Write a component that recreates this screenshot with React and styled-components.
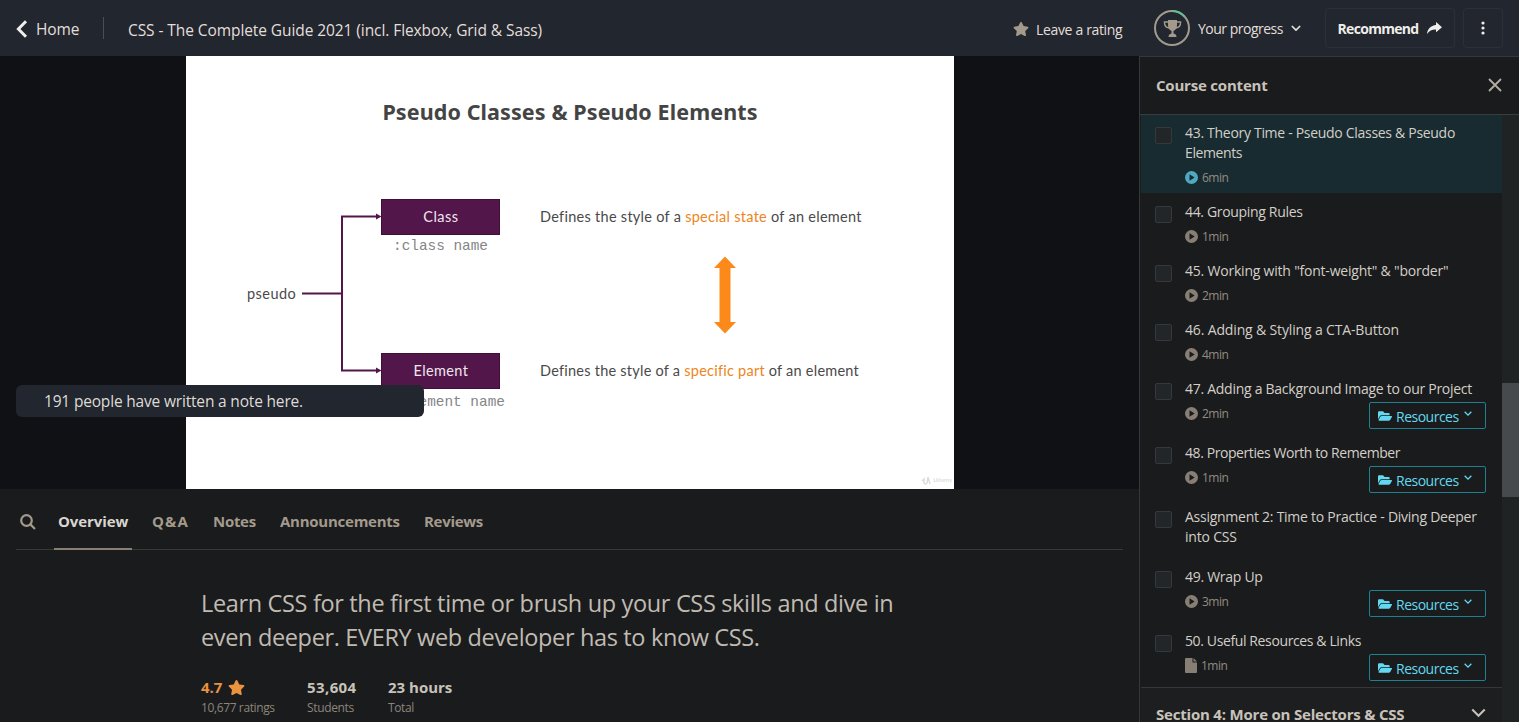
import React from "react";
import styled, { createGlobalStyle } from "styled-components";
import { FaStar, FaFolderOpen } from "react-icons/fa";

const GlobalStyle = createGlobalStyle`
  * { box-sizing: border-box; }
  html, body { margin: 0; height: 722px; overflow: hidden; background: #1a1b1d; }
  body { font-family: "Open Sans", "Noto Sans", sans-serif; color: #d6d2cb; font-size: 14px; }
  svg { display: block; flex: none; }
`;

const Page = styled.div`
  height: 722px;
  display: flex;
  flex-direction: column;
  overflow: hidden;
`;

const Text = styled.span`
  white-space: nowrap;
  font-size: ${(p) => p.$size || 15}px;
  font-weight: ${(p) => p.$weight || 400};
  color: ${(p) => p.$color || "inherit"};
  letter-spacing: ${(p) => p.$track || 0}px;
`;

/* Header */
const Header = styled.header`
  height: 56px;
  flex: none;
  display: flex;
  align-items: center;
  padding: 0 16px;
  background: #22262f;
  color: #e2dfda;
`;
const HomeLink = styled.a`
  display: flex;
  align-items: center;
  gap: 8px;
  width: 87px;
  padding-top: 2px;
`;
const Divider = styled.i`
  width: 1px;
  height: 22px;
  background: #4d4e50;
  margin-right: 24px;
`;
const CourseName = styled.div`
  flex: 1;
  padding-top: 4px;
`;
const Rating = styled.div`
  display: flex;
  align-items: center;
  gap: 7px;
  width: 141px;
  padding-top: 2px;
`;
const Progress = styled.div`
  display: flex;
  align-items: center;
  gap: 8px;
  width: 171px;
`;
const Ring = styled.div`
  position: relative;
  width: 36px;
  height: 36px;
  display: grid;
  place-items: center;
  color: #a39a8c;
`;
const RingArc = styled.svg`
  position: absolute;
  inset: 0;
`;
const HeaderButton = styled.button`
  display: flex;
  align-items: center;
  justify-content: center;
  gap: 9px;
  width: ${(p) => p.$width}px;
  height: 40px;
  padding: 0;
  margin-right: ${(p) => p.$gap || 0}px;
  border: 1px solid #2c3038;
  border-radius: 4px;
  background: transparent;
  color: #f0eeea;
  font-family: inherit;
`;

/* Columns */
const Columns = styled.div`
  flex: 1;
  display: flex;
  min-height: 0;
`;
const Main = styled.main`
  width: 1139px;
  flex: none;
`;
const Player = styled.section`
  position: relative;
  height: 433px;
  display: flex;
  padding-left: 186px;
  background: #101114;
`;
const Slide = styled.div`
  position: relative;
  width: 768px;
  height: 432.5px;
  background: #fff;
  color: #4a4a4a;
  font-family: Lato, sans-serif;
`;
const Connectors = styled.svg`
  position: absolute;
  inset: 0;
`;
const SlideTitle = styled.h1`
  margin: 0;
  padding-top: 40px;
  text-align: center;
  font: 700 21.5px/32px "Noto Sans", sans-serif;
  letter-spacing: 0.1px;
  color: #444;
`;
const Node = styled.div`
  position: absolute;
  left: ${(p) => p.$x}px;
  top: ${(p) => p.$y}px;
  white-space: nowrap;
  font-size: 14.5px;
  line-height: 20px;
  letter-spacing: ${(p) => p.$track || 0}px;
  em { font-style: normal; color: #ee8420; }
`;
const Box = styled(Node)`
  width: 119px;
  height: 36px;
  line-height: 34px;
  text-align: center;
  background: #53164b;
  border: 1px solid #3e1038;
  color: #efe6ee;
`;
const Code = styled(Node)`
  font-family: "Liberation Mono", monospace;
  font-size: 14.4px;
  color: #858585;
`;
const Watermark = styled(Node)`
  display: flex;
  align-items: center;
  gap: 1px;
  font-size: 6px;
  font-weight: 700;
  line-height: 10px;
  color: #dedede;
`;
const NoteToast = styled.div`
  position: absolute;
  left: 16px;
  top: 328.5px;
  width: 408px;
  height: 32px;
  padding: 0 28px;
  display: flex;
  align-items: center;
  border-radius: 6px;
  background: #22262f;
  color: #dedbd5;
`;

const Tabs = styled.nav`
  display: flex;
  align-items: stretch;
  height: 61px;
  margin: 0 16px;
  padding-left: 4px;
  gap: 16px;
  border-bottom: 1px solid #3a392f;
`;
const SearchTab = styled.div`
  display: flex;
  align-items: center;
  width: 18px;
  height: 65px;
  color: #a39a8c;
`;
const Tab = styled.div`
  width: ${(p) => p.$width}px;
  height: 61px;
  padding: 21px 4px 0;
  line-height: 22px;
  color: ${(p) => (p.$active ? "#dad6cf" : "#a39a8c")};
  border-bottom: ${(p) => (p.$active ? "2px solid #887f72" : "none")};
`;
const Overview = styled.section`
  padding: 37px 0 0 201px;
`;
const Headline = styled.h2`
  margin: 0;
  display: flex;
  flex-direction: column;
  font-weight: 400;
  line-height: 33.6px;
  color: #c0bbb2;
`;
const Stats = styled.div`
  display: flex;
  margin-top: 22px;
`;
const Stat = styled.div`
  width: ${(p) => p.$width}px;
  color: ${(p) => p.$color || "#c8c3ba"};
`;
const StatValue = styled.div`
  display: flex;
  align-items: center;
  gap: 6px;
  height: 22px;
`;
const StatLabel = styled.div`
  line-height: 18px;
  color: #8d857a;
`;

/* Sidebar */
const Sidebar = styled.aside`
  flex: 1;
  display: flex;
  flex-direction: column;
  border-left: 1px solid #35383a;
  border-top: 1px solid #35383a;
  background: #1a1b1d;
`;
const SideHeader = styled.div`
  height: 58px;
  flex: none;
  display: flex;
  align-items: center;
  justify-content: space-between;
  padding: 0 17px 1px 16px;
  border-bottom: 1px solid #3a3d3f;
  color: #c8c3ba;
`;
const SideBody = styled.div`
  flex: 1;
  display: flex;
  min-height: 0;
`;
const Lessons = styled.div`
  flex: 1;
  padding-left: 1px;
`;
const Scrollbar = styled.div`
  width: 17px;
  padding-top: 268px;
  background: #1f2324;
`;
const Thumb = styled.div`
  height: 114px;
  background: #464a4d;
`;
const Item = styled.div`
  display: flex;
  padding: 8px 16px ${(p) => p.$bottom}px 14px;
  background: ${(p) => (p.$current ? "#182b31" : "transparent")};
  border-bottom: ${(p) => (p.$current ? "1px solid #1a1b1d" : "none")};
`;
const Check = styled.i`
  width: 17px;
  height: 17px;
  flex: none;
  margin: 4px 13px 0 0;
  border: 1px solid #35393b;
  border-radius: 2px;
  background: #222628;
`;
const ItemBody = styled.div`
  flex: 1;
`;
const ItemTitle = styled.div`
  display: flex;
  flex-direction: column;
  line-height: 20px;
  color: #d3cfc8;
`;
const Meta = styled.div`
  display: flex;
  justify-content: space-between;
  margin-top: 3px;
`;
const Duration = styled.div`
  display: flex;
  align-items: center;
  gap: 4px;
  height: 16px;
  margin: 3px 0 1px;
  color: ${(p) => (p.$current ? "#4fa9c0" : "#887f74")};
`;
const Resources = styled.button`
  display: flex;
  align-items: center;
  width: 117px;
  height: 27px;
  padding: 1px 13px 0 8px;
  border: 1px solid #1f8091;
  border-radius: 2px;
  background: transparent;
  color: #62d9f0;
  font-family: inherit;
  svg:first-child { margin: 0 4px 0 0; }
  svg:last-child { margin: -4px 0 0 auto; }
`;
const SectionRow = styled.div`
  display: flex;
  justify-content: space-between;
  height: 60px;
  padding: 15px 16px 0 15px;
  line-height: 22px;
  border-top: 1px solid #35383a;
  background: #1c1e1f;
  color: #c8c3ba;
  svg { margin-top: 5px; }
`;

function Chevron({ size = 12, width = 2 }) {
  return (
    <svg width={size} height={(size * 8) / 12} viewBox="0 0 12 8" fill="none" stroke="currentColor" strokeWidth={width}>
      <path d="M1 1.200l5 5 5-5" />
    </svg>
  );
}

function PlayIcon() {
  return (
    <svg width="13" height="13" viewBox="0 0 13 13" fill="currentColor">
      <path fillRule="evenodd" d="M6.500 0a6.500 6.500 0 1 1 0 13a6.500 6.500 0 1 1 0-13zM4.500 3.300v6.400l5.200-3.200z" />
    </svg>
  );
}

function FileIcon() {
  return (
    <svg width="12" height="15" viewBox="0 0 12 15" fill="currentColor">
      <path d="M1 0h6.500v4.500H12V14a1 1 0 0 1-1 1H1a1 1 0 0 1-1-1V1a1 1 0 0 1 1-1zM8.500 0L12 3.500H8.500z" />
    </svg>
  );
}

function TrophyIcon() {
  return (
    <svg width="19" height="17" viewBox="0 0 18 17">
      <path fill="currentColor" d="M4.500 0h9v5.500c0 3-1.700 4.800-3.500 5.300v2.700c2 .3 3 1.500 3 3.500H5c0-2 1-3.200 3-3.500v-2.700C6.200 10.300 4.500 8.500 4.500 5.500z" />
      <path fill="none" stroke="currentColor" strokeWidth="1.400" d="M5 2H.9c0 3.500 1.400 5.700 4.800 6M13 2h4.100c0 3.500-1.400 5.700-4.800 6" />
    </svg>
  );
}

function ShareIcon() {
  return (
    <svg width="15" height="12" viewBox="0 0 15 12" fill="currentColor">
      <path d="M9 0l6 5.200-6 5.100V7.400C5 7.300 2.300 8.600 0 12 .6 6.900 3.800 3.600 9 3.100z" />
    </svg>
  );
}

const lessons = [
  { lines: [["43. Theory Time - Pseudo Classes & Pseudo", -0.3], ["Elements", -0.4]], time: "6min", current: true },
  { lines: [["44. Grouping Rules", -0.33]], time: "1min" },
  { lines: [['45. Working with "font-weight" & "border"', -0.21]], time: "2min" },
  { lines: [["46. Adding & Styling a CTA-Button", -0.15]], time: "4min" },
  { lines: [["47. Adding a Background Image to our Project", -0.27]], time: "2min", resources: true },
  { lines: [["48. Properties Worth to Remember", -0.42]], time: "1min", resources: true },
  { lines: [["Assignment 2: Time to Practice - Diving Deeper", -0.26], ["into CSS", -0.2]] },
  { lines: [["49. Wrap Up", -0.28]], time: "3min", resources: true },
  { lines: [["50. Useful Resources & Links", -0.38]], time: "1min", resources: true, file: true },
];

function Lesson({ lines, time, current, resources, file }) {
  const bottom = !time ? 12 : resources ? 6 : current ? 7 : 8;
  return (
    <Item $current={current} $bottom={bottom}>
      <Check />
      <ItemBody>
        <ItemTitle>
          {lines.map(([t, track]) => (
            <Text key={t} $size={14} $track={track}>{t}</Text>
          ))}
        </ItemTitle>
        {time && (
          <Meta>
            <Duration $current={current}>
              {file ? <FileIcon /> : <PlayIcon />}
              <Text $size={12} $track={-0.5} $color="#928b82">{time}</Text>
            </Duration>
            {resources && (
              <Resources>
                <FaFolderOpen size={14} />
                <Text $size={14} $track={-0.5}>Resources</Text>
                <Chevron size={8} width={2} />
              </Resources>
            )}
          </Meta>
        )}
      </ItemBody>
    </Item>
  );
}

export default function App() {
  return (
    <Page>
      <GlobalStyle />
      <Header>
        <HomeLink>
          <svg width="12" height="18" viewBox="0 0 12 18" fill="none" stroke="#f0eeea" strokeWidth="3">
            <path d="M10 1.2L2.4 9l7.6 7.8" />
          </svg>
          <Text $size={15.5} $track={-0.1}>Home</Text>
        </HomeLink>
        <Divider />
        <CourseName>
          <Text $size={15.5} $track={-0.08}>CSS - The Complete Guide 2021 (incl. Flexbox, Grid &amp; Sass)</Text>
        </CourseName>
        <Rating>
          <FaStar size={16} color="#a39a8c" />
          <Text $size={14} $track={-0.34}>Leave a rating</Text>
        </Rating>
        <Progress>
          <Ring>
            <RingArc viewBox="0 0 36 36" fill="none" strokeWidth="2">
              <circle cx="18" cy="18" r="17" stroke="#a39a8c" />
              <path d="M18 1A17 17 0 0 1 30.800 6.800" stroke="#5fbf94" />
            </RingArc>
            <TrophyIcon />
          </Ring>
          <Text $size={14} $track={-0.5}>Your progress</Text>
          <Chevron size={10} width={2} />
        </Progress>
        <HeaderButton $width={130} $gap={8}>
          <Text $size={14} $weight={700} $track={-0.7}>Recommend</Text>
          <ShareIcon />
        </HeaderButton>
        <HeaderButton $width={40}>
          <svg width="4" height="14" viewBox="0 0 4 14" fill="currentColor">
            <circle cx="2" cy="2" r="1.6" />
            <circle cx="2" cy="7" r="1.6" />
            <circle cx="2" cy="12" r="1.6" />
          </svg>
        </HeaderButton>
      </Header>
      <Columns>
        <Main>
          <Player>
            <Slide>
              <Connectors width="768" height="432" fill="none" stroke="#53164b" strokeWidth="2">
                <path d="M116 237.500H156M190 160.500H156V314.500H190" />
                <path d="M190 157.500l5.500 3-5.500 3zM190 311.500l5.500 3-5.500 3z" fill="#53164b" stroke="none" />
                <path d="M539 200.500l11 11.500H544.500V266H550L539 277.500 528 266H533.500V212H528z" fill="#fb8a1b" stroke="none" />
              </Connectors>
              <SlideTitle>Pseudo Classes &amp; Pseudo Elements</SlideTitle>
              <Node $x={61} $y={228} $track={0.45}>pseudo</Node>
              <Box $x={195.4} $y={143} $track={0.5}>Class</Box>
              <Code $x={207} $y={180}>:class name</Code>
              <Box $x={195.4} $y={297} $track={0.35}>Element</Box>
              <Code $x={198} $y={336}>::element name</Code>
              <Node $x={354} $y={151} $track={0.28}>Defines the style of a <em>special state</em> of an element</Node>
              <Node $x={354} $y={305} $track={0.24}>Defines the style of a <em>specific part</em> of an element</Node>
              <Watermark $x={735} $y={419}>
                <svg width="11" height="9" viewBox="0 0 11 9" fill="none" stroke="#dcdcdc" strokeWidth="1.500">
                  <path d="M1 5l2-2v4q1 2 3 0l1-6 2 7" />
                </svg>
                Udemy
              </Watermark>
            </Slide>
            <NoteToast>
              <Text $size={15.5} $track={-0.18}>191 people have written a note here.</Text>
            </NoteToast>
          </Player>
          <Tabs>
            <SearchTab>
              <svg width="16" height="16" viewBox="0 0 16 16" fill="none" stroke="currentColor" strokeWidth="2.2">
                <circle cx="6.500" cy="6.500" r="5.300" />
                <path d="M10.400 10.400L15 15" />
              </svg>
            </SearchTab>
            <Tab $active $width={78}><Text $weight={700} $track={-0.1}>Overview</Text></Tab>
            <Tab $width={45}><Text $weight={700} $track={1.1}>Q&amp;A</Text></Tab>
            <Tab $width={51}><Text $weight={700} $track={-0.3}>Notes</Text></Tab>
            <Tab $width={128}><Text $weight={700} $track={-0.25}>Announcements</Text></Tab>
            <Tab $width={68}><Text $weight={700} $track={-0.3}>Reviews</Text></Tab>
          </Tabs>
          <Overview>
            <Headline>
              <Text $size={23.5} $track={-0.34}>Learn CSS for the first time or brush up your CSS skills and dive in</Text>
              <Text $size={23.5} $track={-0.35}>even deeper. EVERY web developer has to know CSS.</Text>
            </Headline>
            <Stats>
              <Stat $width={106} $color="#e9923f">
                <StatValue><Text $weight={700}>4.7</Text><FaStar size={17} /></StatValue>
                <StatLabel><Text $size={12} $track={-0.38}>10,677 ratings</Text></StatLabel>
              </Stat>
              <Stat $width={81}>
                <StatValue><Text $weight={700} $track={0.4}>53,604</Text></StatValue>
                <StatLabel><Text $size={12} $track={-0.35}>Students</Text></StatLabel>
              </Stat>
              <Stat $width={100}>
                <StatValue><Text $weight={700}>23 hours</Text></StatValue>
                <StatLabel><Text $size={12} $track={-0.4}>Total</Text></StatLabel>
              </Stat>
            </Stats>
          </Overview>
        </Main>
        <Sidebar>
          <SideHeader>
            <Text $weight={700} $track={-0.2}>Course content</Text>
            <svg width="14" height="14" viewBox="0 0 14 14" fill="none" stroke="#b5aea3" strokeWidth="1.800">
              <path d="M1 1l12 12M13 1L1 13" />
            </svg>
          </SideHeader>
          <SideBody>
            <Lessons>
              {lessons.map((l) => <Lesson key={l.lines[0][0]} {...l} />)}
              <SectionRow>
                <Text $weight={700} $track={-0.2}>Section 4: More on Selectors &amp; CSS</Text>
                <Chevron size={15} width={1.600} />
              </SectionRow>
            </Lessons>
            <Scrollbar><Thumb /></Scrollbar>
          </SideBody>
        </Sidebar>
      </Columns>
    </Page>
  );
}
